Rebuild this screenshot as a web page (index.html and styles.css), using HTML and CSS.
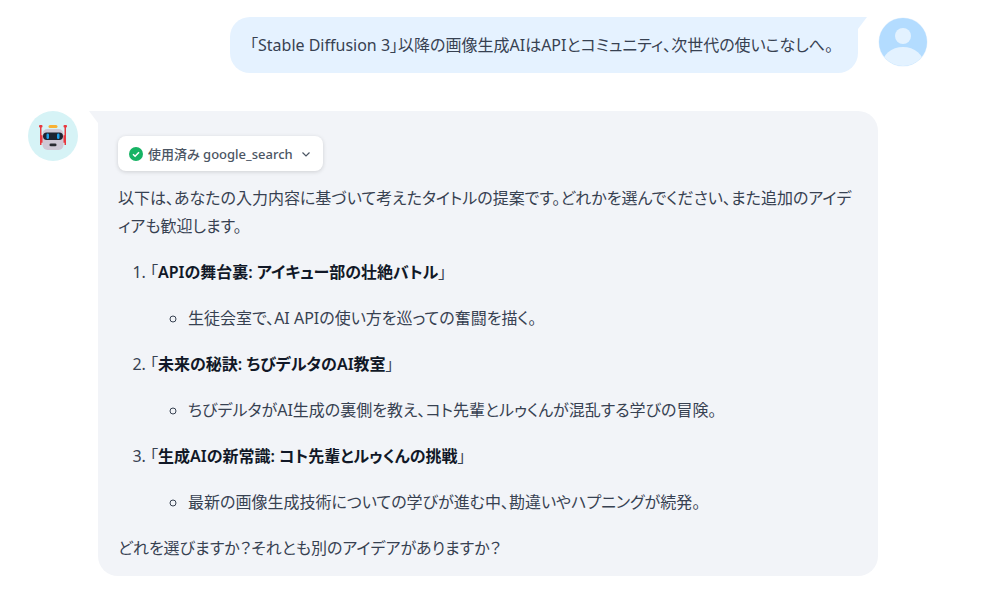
FILE: index.html
```html
<!DOCTYPE html>
<html lang="ja">
<head>
  <meta charset="UTF-8" />
  <title>Chat</title>
  <link rel="stylesheet" href="styles.css">
</head>
<body>

<div class="row row-user">
  <div class="bubble bubble-user">
    「Stable Diffusion 3」以降の画像生成AIはAPIとコミュニティ、次世代の使いこなしへ。
  </div>
  <svg class="avatar" viewBox="0 0 50 50">
    <defs><clipPath id="userClip"><circle cx="25" cy="25" r="24"/></clipPath></defs>
    <circle cx="25" cy="25" r="24.5" fill="#e8f3fd"/>
    <g clip-path="url(#userClip)">
      <rect width="50" height="50" fill="#b3dcff"/>
      <circle cx="25" cy="19" r="8" fill="#e3f2ff"/>
      <ellipse cx="25" cy="48" rx="21" ry="18" fill="#e3f2ff"/>
    </g>
  </svg>
</div>

<div class="row row-bot">
  <svg class="avatar" viewBox="0 0 50 50">
    <circle cx="25" cy="25" r="25" fill="#d6f3f6"/>
    <rect x="18" y="14" width="9" height="3" rx="1.5" fill="#f8b133" transform="translate(2.500 0)"/>
    <rect x="12" y="15" width="1.500" height="19" fill="#e8393f"/>
    <rect x="36.500" y="15" width="1.500" height="19" fill="#e8393f"/>
    <rect x="11" y="14" width="3.500" height="2.500" rx="1" fill="#e8393f"/>
    <rect x="35.500" y="14" width="3.500" height="2.500" rx="1" fill="#e8393f"/>
    <rect x="13" y="24" width="2" height="8" rx="1" fill="#e8393f"/>
    <rect x="35" y="24" width="2" height="8" rx="1" fill="#e8393f"/>
    <rect x="14.500" y="18" width="21" height="21" rx="5" fill="#cfc8d6"/>
    <rect x="15" y="21.500" width="20" height="7.500" rx="3.700" fill="#1d2330"/>
    <rect x="18.500" y="22.500" width="2.500" height="5.500" rx="1.200" fill="#1f9fe8"/>
    <rect x="29" y="22.500" width="2.500" height="5.500" rx="1.200" fill="#1f9fe8"/>
    <rect x="21.500" y="32.500" width="7" height="2.700" rx="1.300" fill="#2a2a33"/>
  </svg>
  <div class="bubble bubble-bot">
    <div class="chip">
      <svg class="chip-check" viewBox="0 0 14 14">
        <circle cx="7" cy="7" r="7" fill="#16b364"/>
        <path d="M4 7.200l2.100 2 3.900-4" fill="none" stroke="#fff" stroke-width="1.500"/>
      </svg>
      <span>使用済み google_search</span>
      <svg class="chip-arrow" viewBox="0 0 10 10">
        <path d="M1.500 3.500L5 7l3.500-3.500" fill="none" stroke="#4b5563" stroke-width="1.200"/>
      </svg>
    </div>
    <p>以下は、あなたの入力内容に基づいて考えたタイトルの提案です。どれかを選んでください、また追加のアイディアも歓迎します。</p>
    <ol>
      <li>
        <p>「<strong>APIの舞台裏: アイキュー部の壮絶バトル</strong>」</p>
        <ul><li>生徒会室で、AI APIの使い方を巡っての奮闘を描く。</li></ul>
      </li>
      <li>
        <p>「<strong>未来の秘訣: ちびデルタのAI教室</strong>」</p>
        <ul><li>ちびデルタがAI生成の裏側を教え、コト先輩とルゥくんが混乱する学びの冒険。</li></ul>
      </li>
      <li>
        <p>「<strong>生成AIの新常識: コト先輩とルゥくんの挑戦</strong>」</p>
        <ul><li>最新の画像生成技術についての学びが進む中、勘違いやハプニングが続発。</li></ul>
      </li>
    </ol>
    <p>どれを選びますか？それとも別のアイデアがありますか？</p>
  </div>
</div>

</body>
</html>
```

FILE: styles.css
```css
body {
  font-family: "Noto Sans", "Noto Sans CJK JP", sans-serif;
  font-feature-settings: "palt";
  margin: 0;
  background: white;
  color: #374151;
  font-size: 16px;
  line-height: 28px;
  padding-top: 17px;
}
.row {
  display: flex;
  align-items: flex-start;
  gap: 20px;
}
.row-user {
  justify-content: flex-end;
  padding-right: 62px;
  margin-bottom: 38px;
}
.row-bot {
  padding-left: 28px;
}
.avatar {
  width: 50px;
  height: 50px;
  flex: none;
}
.bubble {
  position: relative;
  border-radius: 20px;
}
.bubble::before {
  content: "";
  position: absolute;
  top: 0;
  width: 9px;
  height: 12px;
}
.bubble-user {
  background: #e5f2ff;
  padding: 14px 20px;
  width: 588px;
  border-top-right-radius: 0;
}
.bubble-user::before {
  right: -9px;
  background: #e5f2ff;
  clip-path: polygon(0 0, 100% 0, 0 100%);
}
.bubble-bot {
  background: #f2f4f8;
  width: 740px;
  padding: 25px 20px 14px;
  border-top-left-radius: 0;
}
.bubble-bot::before {
  left: -9px;
  background: #f2f4f8;
  clip-path: polygon(0 0, 100% 0, 100% 100%);
}
.chip {
  display: inline-flex;
  align-items: center;
  height: 35px;
  padding: 0 12px 0 11px;
  background: white;
  border-radius: 8px;
  box-shadow: 0 1px 4px rgba(0,0,0,0.15);
  font-size: 13px;
  font-weight: 500;
  color: #4b5563;
  gap: 5px;
  margin-bottom: 13px;
  vertical-align: top;
}
.chip-check {
  width: 14px;
  height: 14px;
}
.chip-arrow {
  width: 10px;
  height: 10px;
  margin-left: 3px;
}
p {
  margin: 0 0 18px;
}
.bubble-bot > p:last-child {
  margin-bottom: 0;
}
ol {
  margin: 0 0 18px;
  padding-left: 32px;
}
ul {
  margin: 0;
  padding-left: 38px;
}
ol > li {
  margin-bottom: 18px;
}
ol > li:last-child {
  margin-bottom: 0;
}
strong {
  color: #111827;
  font-weight: 600;
}
```
